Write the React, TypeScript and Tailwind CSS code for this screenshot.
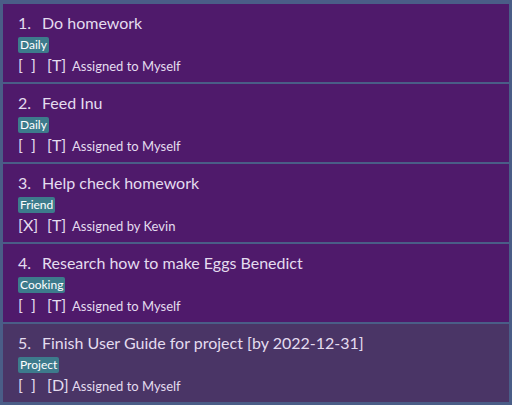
import React from "react";

type Task = {
  n: number;
  title: string;
  tag: string;
  done: boolean;
  kind: string;
  who: string;
  selected?: boolean;
};

const tasks: Task[] = [
  { n: 1, title: "Do homework", tag: "Daily", done: false, kind: "T", who: "Assigned to Myself" },
  { n: 2, title: "Feed Inu", tag: "Daily", done: false, kind: "T", who: "Assigned to Myself" },
  { n: 3, title: "Help check homework", tag: "Friend", done: true, kind: "T", who: "Assigned by Kevin" },
  { n: 4, title: "Research how to make Eggs Benedict", tag: "Cooking", done: false, kind: "T", who: "Assigned to Myself" },
  { n: 5, title: "Finish User Guide for project [by 2022-12-31]", tag: "Project", done: false, kind: "D", who: "Assigned to Myself", selected: true },
];

export default function App() {
  return (
    <div
      className="w-[512px] h-[405px] bg-[#4a5d87] pt-[4px] pl-[3px] pr-[3px] pb-[3px] flex flex-col gap-[2px] overflow-hidden"
      style={{ fontFamily: 'Lato, "Noto Sans", sans-serif' }}
    >
      {tasks.map((t) => (
        <div
          key={t.n}
          className={`h-[78px] shrink-0 pl-[15px] pt-[8px] flex flex-col text-[#e4dcef] ${
            t.selected ? "bg-[#4a3566]" : "bg-[#4f1a6b]"
          }`}
        >
          <div className="flex items-baseline h-[22px] text-[16px] leading-[22px]">
            <span className="w-[24px]">{t.n}.</span>
            <span>{t.title}</span>
          </div>
          <div className="mt-[3px] flex">
            <span className="bg-[#3d7b8c] text-white text-[12px] leading-[16px] h-[16px] px-[2px] rounded-[2px]">
              {t.tag}
            </span>
          </div>
          <div className="mt-[2px] flex items-baseline h-[20px] leading-[20px]">
            <span className="text-[16px] w-[29px] whitespace-pre">{t.done ? "[X]" : "[  ]"}</span>
            <span className="text-[16px] w-[25px]">[{t.kind}]</span>
            <span className="text-[13px]">{t.who}</span>
          </div>
        </div>
      ))}
    </div>
  );
}
